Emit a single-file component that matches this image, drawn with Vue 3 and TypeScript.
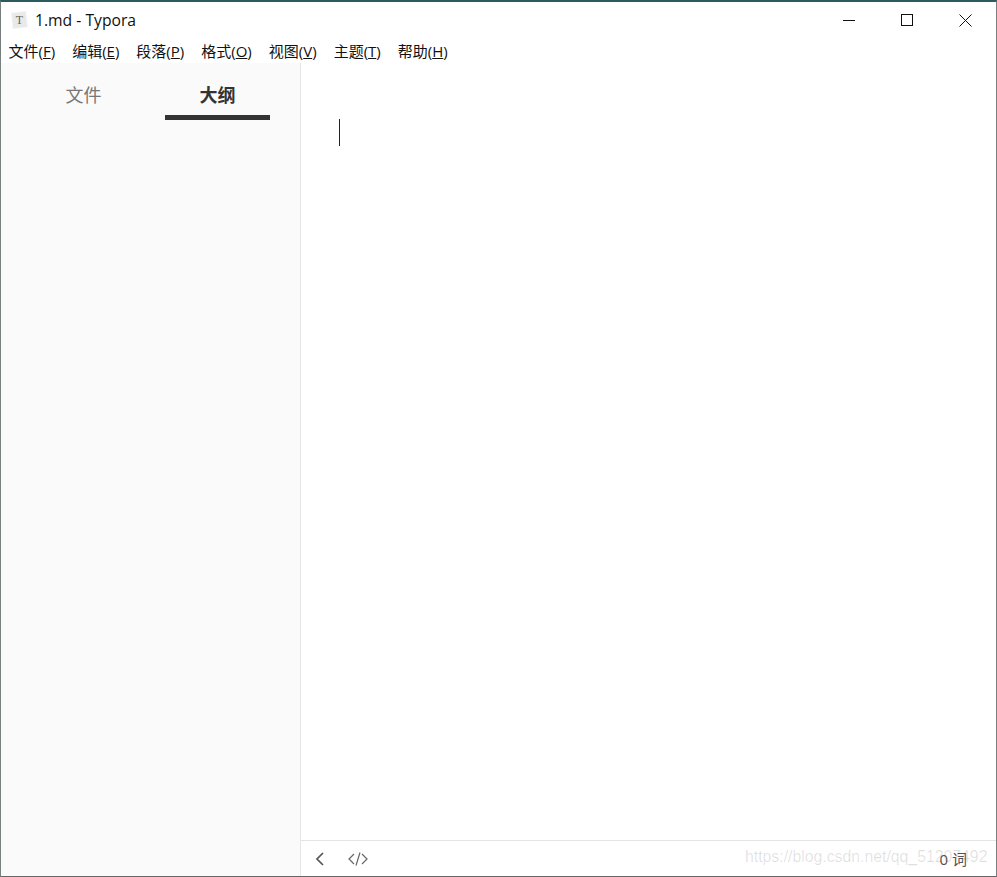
<script setup lang="ts">
interface MenuItem {
  label: string
  key: string
}

const menus: MenuItem[] = [
  { label: '文件', key: 'F' },
  { label: '编辑', key: 'E' },
  { label: '段落', key: 'P' },
  { label: '格式', key: 'O' },
  { label: '视图', key: 'V' },
  { label: '主题', key: 'T' },
  { label: '帮助', key: 'H' },
]
</script>

<template>
  <div class="window">
    <header class="titlebar">
      <svg class="app-icon" width="19" height="20" viewBox="0 0 19 20">
        <path d="M1.5 3 15.8 1.5 17.5 17 3 18.5Z" fill="#e9e9e9" stroke="#f4f4f4" />
        <text x="9.5" y="14" text-anchor="middle" class="icon-letter">T</text>
      </svg>
      <span class="title">1.md - Typora</span>
      <div class="controls">
        <svg width="12" height="12" viewBox="0 0 12 12">
          <path d="M0 6.5h12" stroke="#111" fill="none" />
        </svg>
        <svg width="12" height="12" viewBox="0 0 12 12">
          <rect x="0.5" y="0.5" width="11" height="11" stroke="#111" fill="none" />
        </svg>
        <svg width="13" height="13" viewBox="0 0 13 13">
          <path d="M.5.5l12 12M12.5.5l-12 12" stroke="#111" fill="none" />
        </svg>
      </div>
    </header>

    <nav class="menubar">
      <span v-for="m in menus" :key="m.key" class="menu-item">{{ m.label }}(<u>{{ m.key }}</u>)</span>
    </nav>

    <div class="body">
      <aside class="sidebar">
        <div class="tabs">
          <div class="tab">文件</div>
          <div class="tab active">大纲</div>
        </div>
      </aside>

      <main class="content">
        <div class="editor">
          <div class="caret"></div>
        </div>
        <footer class="statusbar">
          <svg width="10" height="14" viewBox="0 0 10 14">
            <path d="M8 1 2 7l6 6" fill="none" stroke="#555" stroke-width="1.7" />
          </svg>
          <svg class="code-icon" width="20" height="14" viewBox="0 0 20 14">
            <path d="M6 2 1 7l5 5M14 2l5 5-5 5M12 0.5 8 13.5" fill="none" stroke="#666" stroke-width="1.2" />
          </svg>
          <span class="words">0 词</span>
          <span class="watermark">https://blog.csdn.net/qq_51207492</span>
        </footer>
      </main>
    </div>
  </div>
</template>

<style>
html,
body {
  margin: 0;
  background: #fff;
}
</style>

<style scoped>
.window {
  box-sizing: border-box;
  width: 997px;
  height: 877px;
  display: flex;
  flex-direction: column;
  background: #fff;
  border-top: 2px solid #2b5b5c;
  border-left: 1px solid #77807f;
  border-right: 1px solid #77807f;
  border-bottom: 1px solid #666;
  font-family: "Open Sans", "Noto Sans CJK SC", sans-serif;
  color: #222;
  overflow: hidden;
}

.titlebar {
  height: 36px;
  flex: none;
  display: flex;
  align-items: center;
  padding-left: 9px;
}

.app-icon {
  margin-right: 6px;
}

.icon-letter {
  font-family: "Liberation Serif", serif;
  font-size: 12px;
  fill: #666;
}

.title {
  font-size: 15.7px;
  color: #111;
}

.controls {
  margin-left: auto;
  display: flex;
  align-items: center;
  gap: 46px;
  padding-right: 24px;
}

.menubar {
  height: 25px;
  flex: none;
  display: flex;
  align-items: center;
  padding-left: 7.5px;
  gap: 17px;
  font-size: 15px;
  color: #111;
}

.body {
  flex: 1;
  display: flex;
  min-height: 0;
}

.sidebar {
  flex: none;
  box-sizing: border-box;
  background: #fafafa;
  border-right: 1px solid #e6e6e6;
  width: 300px;
}

.tabs {
  display: flex;
  padding: 13px 30px 0 30px;
  justify-content: space-between;
}

.tab {
  width: 105px;
  height: 39px;
  box-sizing: border-box;
  text-align: center;
  font-size: 18px;
  line-height: 39px;
  color: #777;
}

.tab.active {
  color: #333;
  font-weight: 700;
  border-bottom: 5px solid #333;
  height: 44px;
}

.content {
  flex: 1;
  display: flex;
  flex-direction: column;
  min-width: 0;
}

.editor {
  flex: 1;
  padding: 56px 0 0 38px;
}

.caret {
  width: 1px;
  height: 27px;
  background: #222;
}

.statusbar {
  height: 35px;
  flex: none;
  position: relative;
  display: flex;
  align-items: center;
  border-top: 1px solid #e4e4e4;
  padding-left: 14px;
  gap: 23px;
}

.words {
  margin-left: auto;
  margin-right: 29px;
  font-size: 15px;
  color: #555;
}

.watermark {
  position: absolute;
  left: 444px;
  top: 7px;
  font-family: "Liberation Sans", sans-serif;
  font-size: 15.8px;
  color: rgba(0, 0, 0, 0.12);
  white-space: nowrap;
}
</style>
